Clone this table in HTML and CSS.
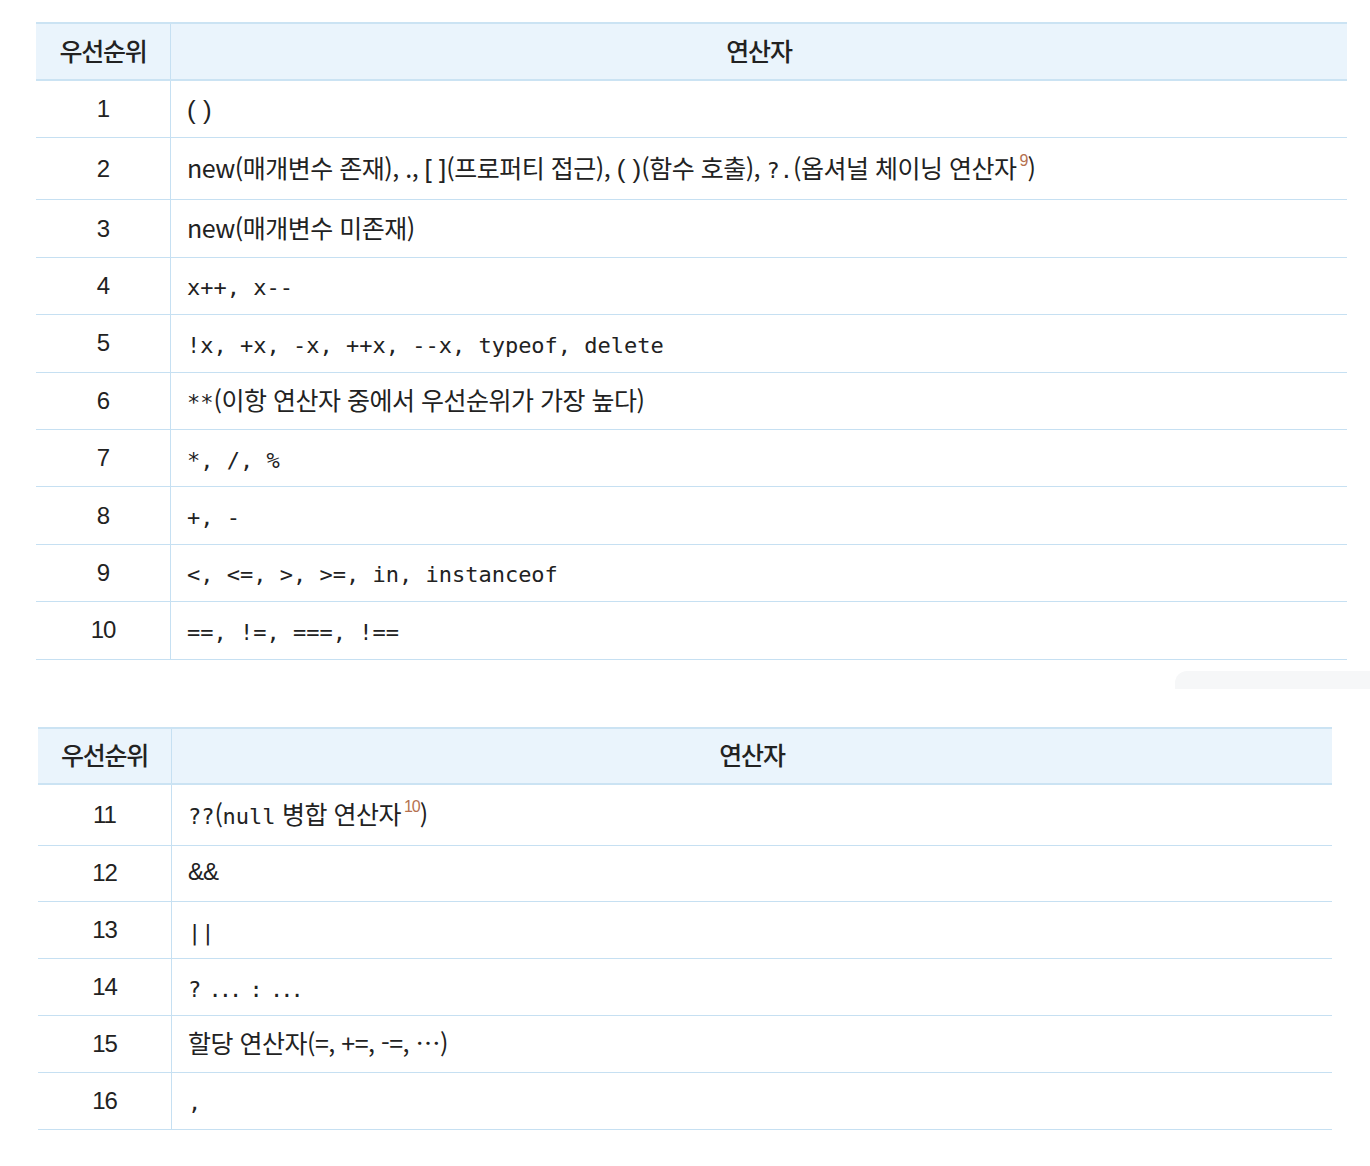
FILE: index.html
```html
<!DOCTYPE html>
<html lang="ko">
<head>
<meta charset="utf-8">
<link rel="stylesheet" href="styles.css">
</head>
<body>
<div class="page">
  <table class="prec prec-a">
    <thead>
      <tr><th class="num">우선순위</th><th class="op">연산자</th></tr>
    </thead>
    <tbody>
      <tr><td class="num">1</td><td class="op"><span class="pr">( )</span></td></tr>
      <tr class="tall"><td class="num">2</td><td class="op">new(매개변수 존재), ., <span class="pr">[ ]</span>(프로퍼티 접근), <span class="pr">( )</span>(함수 호출), <span class="m">?.</span>(옵셔널 체이닝 연산자<sup class="fn">9</sup>)</td></tr>
      <tr><td class="num">3</td><td class="op">new(매개변수 미존재)</td></tr>
      <tr><td class="num">4</td><td class="op"><span class="m">x++, x--</span></td></tr>
      <tr><td class="num">5</td><td class="op"><span class="m">!x, +x, -x, ++x, --x, typeof, delete</span></td></tr>
      <tr><td class="num">6</td><td class="op"><span class="m">**</span>(이항 연산자 중에서 우선순위가 가장 높다)</td></tr>
      <tr><td class="num">7</td><td class="op"><span class="m">*, /, %</span></td></tr>
      <tr><td class="num">8</td><td class="op"><span class="m">+, -</span></td></tr>
      <tr><td class="num">9</td><td class="op"><span class="m">&lt;, &lt;=, &gt;, &gt;=, in, instanceof</span></td></tr>
      <tr><td class="num">10</td><td class="op"><span class="m">==, !=, ===, !==</span></td></tr>
    </tbody>
  </table>

  <div class="smudge"></div>

  <table class="prec prec-b">
    <thead>
      <tr><th class="num">우선순위</th><th class="op">연산자</th></tr>
    </thead>
    <tbody>
      <tr class="tall"><td class="num">11</td><td class="op"><span class="m">??</span>(<span class="m">null</span> 병합 연산자<sup class="fn">10</sup>)</td></tr>
      <tr><td class="num">12</td><td class="op amp">&amp;&amp;</td></tr>
      <tr><td class="num">13</td><td class="op"><span class="m">||</span></td></tr>
      <tr><td class="num">14</td><td class="op"><span class="m tight">? ... : ...</span></td></tr>
      <tr><td class="num">15</td><td class="op">할당 연산자(=, +=, -=, …)</td></tr>
      <tr><td class="num">16</td><td class="op"><span class="m">,</span></td></tr>
    </tbody>
  </table>
</div>
</body>
</html>
```

FILE: styles.css
```css
html, body {
  margin: 0;
  padding: 0;
  background: #ffffff;
}

.page {
  padding-top: 22px;
  display: flex;
  flex-direction: column;
}

.prec {
  border-collapse: collapse;
  table-layout: fixed;
  color: #222222;
  font-family: "Noto Sans CJK KR", "Liberation Sans", sans-serif;
  font-size: 25px;
  letter-spacing: -0.5px;
}

.prec-a {
  margin-left: 36px;
  width: 1311px;
}

.prec-b {
  margin-left: 38px;
  width: 1294px;
  margin-top: 38px;
}

.prec-a .num { width: 134px; }
.prec-b .num { width: 133px; }

.prec th {
  background: #eaf4fc;
  font-weight: 500;
  height: 52px;
  padding: 0 0 3px 0;
  border-top: 2px solid #cbe3f3;
  border-bottom: 2px solid #cbe3f3;
  text-align: center;
  vertical-align: middle;
  letter-spacing: -1.2px;
}

.prec-b th {
  height: 51px;
}

.prec td {
  height: 55.8px;
  padding: 0;
  border-bottom: 1px solid #c6e0f2;
  vertical-align: middle;
}

.prec-a td {
  height: 56.4px;
}

.prec-a tr.tall td {
  height: 61px;
}

.prec-b tr.tall td {
  height: 60px;
}

.prec td.op {
  padding-bottom: 3px;
  height: 52.8px;
}

.prec-a td.op {
  height: 53.4px;
}

.prec-a tr.tall td.op {
  height: 58px;
}

.prec-b tr.tall td.op {
  height: 57px;
}

.prec th.num,
.prec td.num {
  border-right: 1px solid #c6e0f2;
}

.prec td.num {
  text-align: center;
  font-family: "Liberation Sans", Arial, sans-serif;
  font-size: 24px;
  letter-spacing: -1px;
}

.prec td.op {
  text-align: left;
  padding-left: 16px;
}

.prec td.amp {
  font-family: "Liberation Sans", Arial, sans-serif;
  font-size: 24px;
  letter-spacing: -1px;
}

.pr {
  font-family: "Liberation Sans", Arial, sans-serif;
  font-size: 26px;
  letter-spacing: 0;
}

.m {
  font-family: "DejaVu Sans Mono", "Liberation Mono", monospace;
  font-size: 22px;
  letter-spacing: 0;
}

.m.tight {
  letter-spacing: -3px;
}

.fn {
  font-family: "Liberation Sans", Arial, sans-serif;
  font-size: 16px;
  letter-spacing: -1px;
  color: #b5714f;
  vertical-align: 12px;
  line-height: 0;
  margin-left: 3px;
}

.smudge {
  align-self: flex-end;
  width: 195px;
  height: 18px;
  margin-top: 11px;
  border-radius: 12px 0 0 0;
  background: #f6f7f8;
}
```
